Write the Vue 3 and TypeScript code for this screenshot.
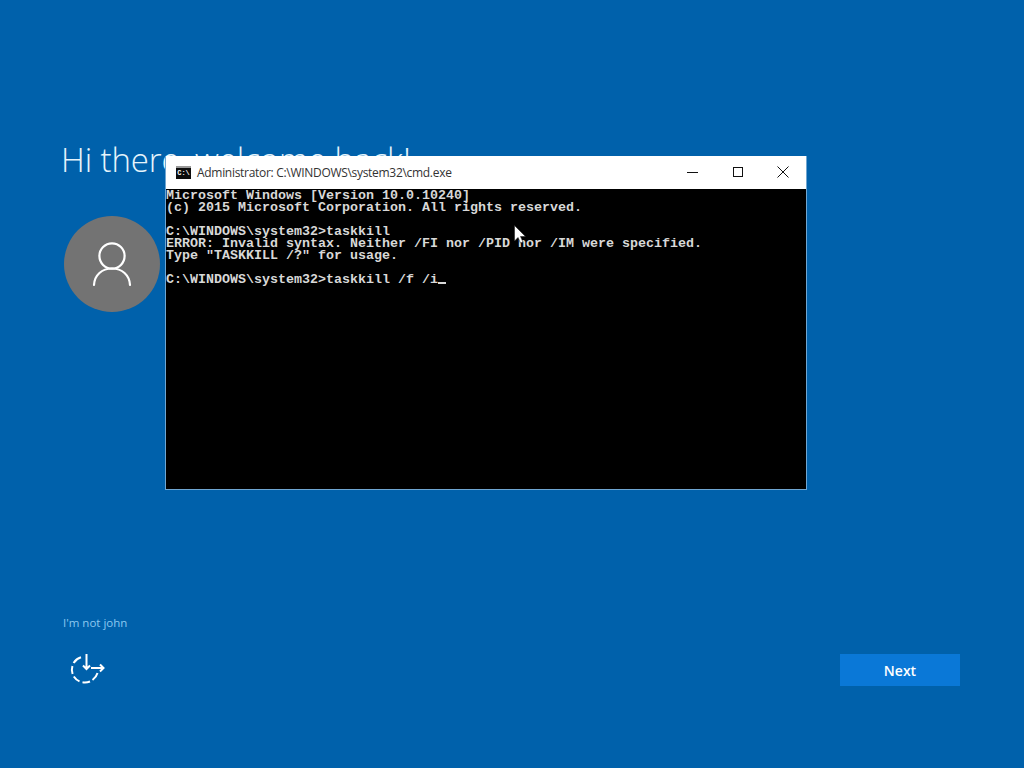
<script setup lang="ts">
const lines: string[] = [
  'Microsoft Windows [Version 10.0.10240]',
  '(c) 2015 Microsoft Corporation. All rights reserved.',
  '',
  'C:\\WINDOWS\\system32>taskkill',
  'ERROR: Invalid syntax. Neither /FI nor /PID nor /IM were specified.',
  'Type "TASKKILL /?" for usage.',
  '',
]
</script>

<template>
  <div class="screen">
    <main class="signin">
      <h1 class="greeting">Hi there, welcome back!</h1>
      <div class="avatar">
        <svg width="42" height="46" viewBox="0 0 42 46" fill="none" stroke="#fff" stroke-width="2.2" stroke-linecap="round">
          <circle cx="21" cy="15" r="12.6" />
          <path d="M3 44 C3.5 34 11 27.5 21 27.5 C31 27.5 38.5 34 39 44" />
        </svg>
      </div>
    </main>

    <footer class="foot">
      <a class="switch-user">I'm not john</a>
      <div class="actions">
        <svg class="ease" width="36" height="32" viewBox="0 0 36 32" fill="none" stroke="#fff" stroke-width="2">
          <path d="M11 3.2 A13 13 0 0 0 3.6 9 M2.4 12 A13 13 0 0 0 2.6 20 M3.8 22.5 A13 13 0 0 0 9.5 27.4 M12.5 28.3 A13 13 0 0 0 20 27.5 M22.5 26 A13 13 0 0 0 27.5 19" />
          <path d="M16.5 0 V15 M13 11.5 L16.5 15 L20 11.5" />
          <path d="M21 14 H33.5 M30 10.5 L33.5 14 L30 17.5" />
        </svg>
        <button class="next">Next</button>
      </div>
    </footer>

    <section class="cmd">
      <header class="titlebar">
        <span class="cmd-icon">C:\</span>
        <span class="title">Administrator: C:\WINDOWS\system32\cmd.exe</span>
        <div class="controls">
          <svg width="12" height="12" viewBox="0 0 12 12" stroke="#111" fill="none"><path d="M0 6.5 H11" /></svg>
          <svg width="12" height="12" viewBox="0 0 12 12" stroke="#111" fill="none"><rect x="1.5" y="1.5" width="9" height="9" /></svg>
          <svg width="12" height="12" viewBox="0 0 12 12" stroke="#111" fill="none"><path d="M.5 .5 L11.5 11.5 M11.5 .5 L.5 11.5" /></svg>
        </div>
      </header>
      <div class="console">
        <div v-for="(line, i) in lines" :key="i" class="line">{{ line }}</div>
        <div class="line">C:\WINDOWS\system32&gt;taskkill /f /i<span class="caret"></span></div>
      </div>
      <svg class="pointer" width="13" height="19" viewBox="0 0 13 19">
        <path d="M.5 .5 V16 L4 12.5 L6.5 18 L9 17 L6.5 11.5 H11.5 Z" fill="#fff" stroke="#222" stroke-width=".6" />
      </svg>
    </section>
  </div>
</template>

<style scoped>
.screen {
  position: relative;
  width: 1024px;
  height: 768px;
  overflow: hidden;
  background: #0061ab;
  color: #fff;
  display: flex;
  flex-direction: column;
  justify-content: space-between;
  font-family: "Open Sans", "Liberation Sans", sans-serif;
}
.signin {
  padding: 138px 0 0 61px;
}
.greeting {
  margin: 0;
  font-size: 33px;
  letter-spacing: -0.1px;
  line-height: 44px;
  font-weight: 300;
  color: #e6f4fb;
  white-space: nowrap;
}
.avatar {
  margin: 34px 0 0 3px;
  width: 96px;
  height: 96px;
  border-radius: 50%;
  background: #737373;
  display: flex;
  align-items: center;
  justify-content: center;
}
.foot {
  padding: 0 64px 82px 63px;
}
.switch-user {
  display: block;
  font-size: 11.5px;
  line-height: 16px;
  color: #8cc8f0;
}
.actions {
  margin-top: 23px;
  display: flex;
  align-items: center;
  justify-content: space-between;
}
.ease {
  margin-left: 7px;
}
.next {
  width: 120px;
  height: 32px;
  border: 0;
  padding: 0;
  background: #0a78d7;
  color: #fff;
  font-family: "Open Sans", "Liberation Sans", sans-serif;
  font-size: 14px;
  font-weight: 600;
}
.cmd {
  position: absolute;
  left: 165px;
  top: 156px;
  width: 642px;
  height: 334px;
  box-sizing: border-box;
  border: 1px solid #6fa6d2;
  border-top: 0;
  background: #000;
  display: flex;
  flex-direction: column;
}
.titlebar {
  height: 33px;
  flex: none;
  background: #fff;
  display: flex;
  align-items: center;
  padding-left: 10px;
  color: #222;
}
.cmd-icon {
  width: 15px;
  height: 11px;
  margin-right: 6px;
  background: #0c0c0c;
  color: #fff;
  border-top: 2px solid #999;
  font: bold 7px/11px "Liberation Mono", monospace;
  text-align: center;
  overflow: hidden;
}
.title {
  font-size: 12px;
  letter-spacing: -0.3px;
  color: #333;
}
.controls {
  margin-left: auto;
  width: 102px;
  margin: -2px 17px 0 auto;
  display: flex;
  justify-content: space-between;
  align-items: center;
}
.console {
  flex: 1;
  padding-top: 1px;
  color: #d8d8d8;
  font: bold 13.33px/12px "Liberation Mono", monospace;
  white-space: pre;
}
.line {
  height: 12px;
}
.caret {
  display: inline-block;
  width: 8px;
  height: 2px;
  background: #d8d8d8;
  vertical-align: -1px;
}
.pointer {
  position: absolute;
  left: 348px;
  top: 69px;
}
</style>
